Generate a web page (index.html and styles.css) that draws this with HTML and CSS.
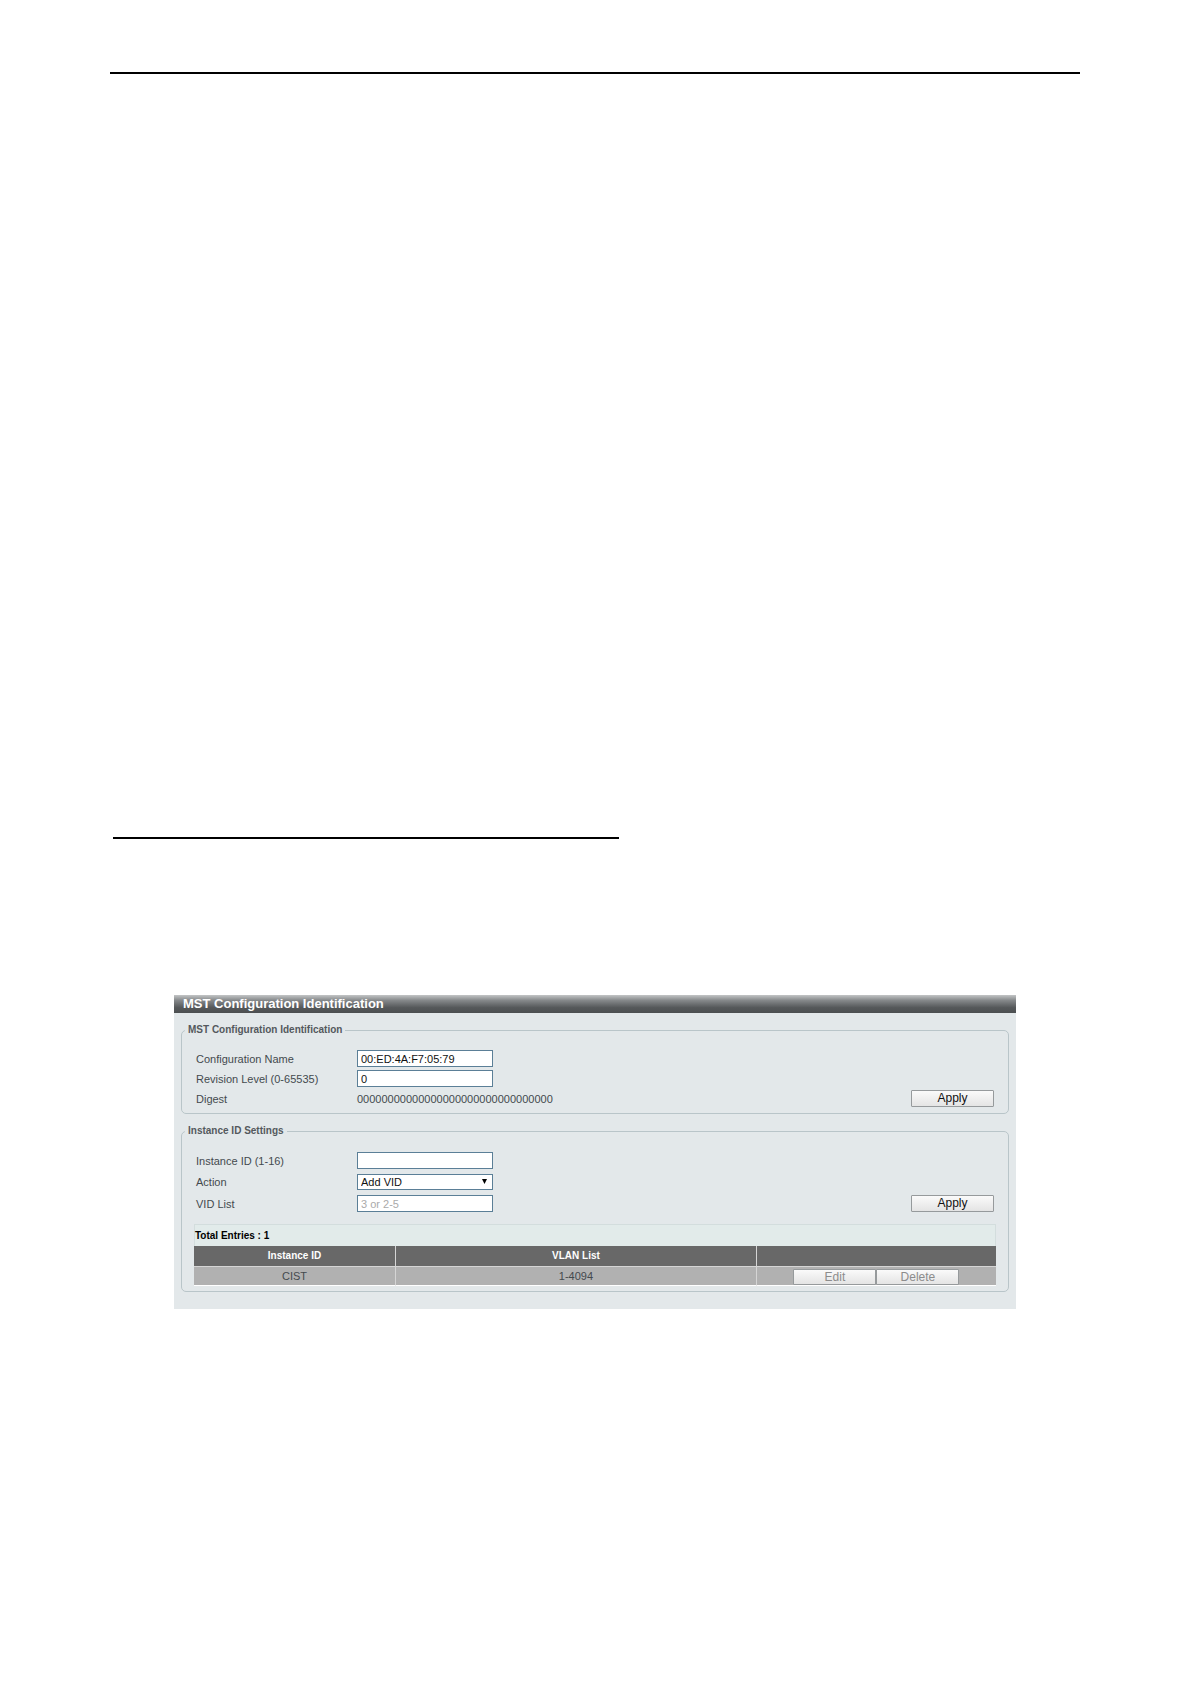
FILE: index.html
```
<!DOCTYPE html>
<html lang="en">
<head>
  <meta charset="UTF-8" />
  <meta name="viewport" content="width=device-width, initial-scale=1.0" />
  <title>MST Configuration Identification</title>
  <link rel="stylesheet" href="styles.css">
</head>
<body>
  <hr class="page-rule" />
  <hr class="section-rule" />

  <main class="panel">
    <h1>MST Configuration Identification</h1>

    <form>
      <fieldset>
        <legend>MST Configuration Identification</legend>
        <div class="rows identification">
          <div class="row">
            <label for="configName">Configuration Name</label>
            <input type="text" id="configName" value="00:ED:4A:F7:05:79" />
          </div>
          <div class="row">
            <label for="revision">Revision Level (0-65535)</label>
            <input type="text" id="revision" value="0" />
          </div>
          <div class="row">
            <label for="digest">Digest</label>
            <output id="digest">00000000000000000000000000000000</output>
            <button type="button" class="apply">Apply</button>
          </div>
        </div>
      </fieldset>
    </form>

    <form>
      <fieldset>
        <legend>Instance ID Settings</legend>
        <div class="rows instance">
          <div class="row">
            <label for="instanceId">Instance ID (1-16)</label>
            <input type="text" id="instanceId" />
          </div>
          <div class="row">
            <label for="action">Action</label>
            <span class="select">
              <select id="action">
                <option>Add VID</option>
                <option>Remove VID</option>
              </select>
              <svg class="arrow" viewBox="0 0 5 5" aria-hidden="true"><path d="M0 0h5L2.5 5z" /></svg>
            </span>
          </div>
          <div class="row">
            <label for="vidList">VID List</label>
            <input type="text" id="vidList" placeholder="3 or 2-5" />
            <button type="button" class="apply">Apply</button>
          </div>
        </div>

        <table>
          <caption>Total Entries : 1</caption>
          <thead>
            <tr>
              <th class="col-id">Instance ID</th>
              <th class="col-vlan">VLAN List</th>
              <th></th>
            </tr>
          </thead>
          <tbody>
            <tr>
              <td>CIST</td>
              <td>1-4094</td>
              <td>
                <div class="actions">
                  <button type="button" disabled>Edit</button>
                  <button type="button" disabled>Delete</button>
                </div>
              </td>
            </tr>
          </tbody>
        </table>
      </fieldset>
    </form>
  </main>
</body>
</html>
```
FILE: styles.css
```
:root {
  --panel-bg: #e3e8ea;
  --line: #b9c5c9;
  --field-border: #5b7f97;
  --text: #444a4e;
}

* {
  box-sizing: border-box;
}

body {
  font-family: "Liberation Sans", Arial, sans-serif;
  font-size: 11px;
  line-height: 12px;
  margin: 0;
  padding: 72px 111px 72px 110px;
  background: #fff;
  color: var(--text);
}

hr {
  border: none;
  height: 2px;
  margin: 0;
  background: #000;
}

.section-rule {
  width: 506px;
  max-width: 100%;
  margin: 763px 0 156px 3px;
}

.panel {
  margin: 0 64px;
  padding-bottom: 17px;
  background: var(--panel-bg);
}

h1 {
  height: 18px;
  margin: 0;
  padding-left: 9px;
  background: linear-gradient(#c3c5c6, #85888a 30%, #55585a 70%, #4c4f51);
  color: #fff;
  font-size: 13px;
  line-height: 17px;
  font-weight: bold;
}

form {
  padding: 11px 7px 0;
}

fieldset {
  min-width: 0;
  margin: 0;
  padding: 14px 12px 5px;
  border: 1px solid var(--line);
  border-radius: 5px;
}

legend {
  margin-left: -9px;
  padding: 0 3px;
  font-weight: bold;
  font-size: 10px;
  color: #54595d;
}

.rows {
  display: flex;
  flex-direction: column;
  padding: 0 2px;
}

.identification {
  gap: 3px;
  padding-bottom: 1px;
}

.instance {
  gap: 5px;
  padding-top: 1px;
}

.row {
  display: flex;
  align-items: center;
}

.row label {
  flex: 0 0 161px;
}

input,
select {
  width: 136px;
  height: 17px;
  margin: 0;
  padding: 0 3px;
  border: 1px solid var(--field-border);
  border-radius: 0;
  background: #fff;
  color: #111;
  font: inherit;
}

input::placeholder {
  color: #aaa;
}

.select {
  position: relative;
  display: flex;
}

select {
  height: 16px;
  appearance: none;
}

.arrow {
  position: absolute;
  top: 5px;
  right: 6px;
  width: 5px;
  height: 5px;
  pointer-events: none;
}

button {
  width: 83px;
  height: 17px;
  padding: 0;
  border: 1px solid #969a9c;
  border-radius: 1px;
  background: linear-gradient(#fafafa, #e4e4e4);
  color: #111;
  font: inherit;
  font-size: 12px;
  line-height: 15px;
}

button:disabled {
  color: #8c8c8c;
}

.apply {
  margin-left: auto;
}

table {
  width: 100%;
  margin-top: 12px;
  table-layout: fixed;
  border-collapse: separate;
  border-spacing: 0;
  text-align: center;
}

caption {
  height: 22px;
  border: 1px solid #d3dddd;
  border-bottom: none;
  background: #e2ebea;
  color: #000;
  font-weight: bold;
  font-size: 10px;
  line-height: 21px;
  text-align: left;
}

th,
td {
  padding: 0;
  border-right: 1px solid #d5d5d5;
  border-bottom: 1px solid #d5d5d5;
}

th:last-child,
td:last-child {
  border-right: none;
}

th {
  height: 21px;
  background: #686868;
  color: #fff;
  font-size: 10px;
}

td {
  height: 19px;
  background: #b1b1b1;
  border-bottom-color: #fff;
}

.col-id {
  width: 202px;
}

.col-vlan {
  width: 45%;
}

.actions {
  display: flex;
  justify-content: center;
  align-items: flex-end;
  height: 18px;
}

.actions button {
  height: 16px;
  line-height: 14px;
}
```
